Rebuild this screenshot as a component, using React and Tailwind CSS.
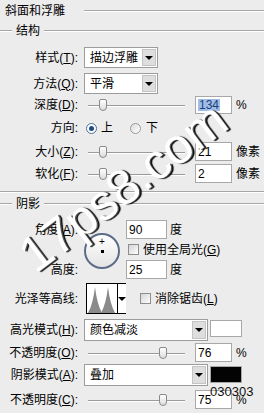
import React from 'react';

const Label = ({ name, k, w = 'w-[84px]' }) => (
    <span className={`${w} shrink-0 pr-[6px] text-right whitespace-nowrap`}>
        {name}
        {k && (<>(<u>{k}</u>)</>)}:
    </span>
);

const Arrow = () => (
    <span className="block w-0 h-0 border-l-[4px] border-r-[4px] border-t-[4px] border-l-transparent border-r-transparent border-t-black"></span>
);

const Select = ({ text, w }) => (
    <div className={`${w} h-full flex items-stretch bg-white border border-[#9c9c9c]`}>
        <span className="flex-1 pl-[5px] flex items-center">{text}</span>
        <span className="w-[14px] m-[1px] flex items-center justify-center bg-[#dedede] border border-[#c4c4c4]">
            <Arrow />
        </span>
    </div>
);

const Input = ({ value, w = 'w-[37px]', hl }) => (
    <div className={`${w} h-full bg-white border border-[#a8a8a8] pl-[2px] flex items-center`}>
        {hl ? <span className="bg-[#9fbde6] text-[#1d3f7a] px-[1px]">{value}</span> : <span>{value}</span>}
    </div>
);

const Slider = ({ at }) => (
    <div className="w-[111px] h-full relative shrink-0">
        <div className="absolute left-[4px] w-[97px] top-1/2 h-[2px] border-t border-[#9a9a9a] border-b border-b-white"></div>
        <div
            className="absolute top-1/2 -translate-y-1/2 w-[8px] h-[12px] rounded-b-[4px] rounded-t-[2px] border border-[#8a8a8a] bg-gradient-to-b from-white to-[#dcdcdc]"
            style={{ left: at }}
        ></div>
    </div>
);

const Radio = ({ on }) => (
    <span className={`w-[11px] h-[11px] rounded-full border flex items-center justify-center ${on ? 'border-[#4d6f9c] bg-white' : 'border-[#9a9a9a] bg-gradient-to-br from-[#dcdcdc] to-white'}`}>
        {on && <span className="w-[5px] h-[5px] rounded-full bg-[#1f4a8a]"></span>}
    </span>
);

const Check = () => (
    <span className="block w-[11px] h-[11px] shrink-0 border border-[#8e8e8e] bg-gradient-to-br from-[#d4d4d4] to-white"></span>
);

const Group = ({ title }) => (
    <div className="flex items-center">
        <div className="w-[12px] border-t border-[#a6a6a6] border-b border-b-white"></div>
        <span className="px-[4px]">{title}</span>
        <div className="flex-1 border-t border-[#a6a6a6] border-b border-b-white"></div>
    </div>
);

export default function App() {
    return (
        <div className="w-[264px] h-[413px] relative overflow-hidden bg-[#ececec] text-black text-[12px] leading-none font-['Liberation_Sans','Noto_Sans_CJK_SC',sans-serif]">
            <div className="flex flex-col">
                {/* 结构 */}
                <div className="h-[22px] flex items-center">
                    <span className="w-[84px] pl-[5px]">斜面和浮雕</span>
                    <div className="flex-1 border-t border-[#a6a6a6] border-b border-b-white"></div>
                </div>
                <div className="h-[18px] flex items-center"><div className="flex-1"><Group title="结构" /></div></div>

                <div className="mt-[7px] h-[21px] flex items-center">
                    <Label name="样式" k="T" />
                    <Select text="描边浮雕" w="w-[74px]" />
                </div>
                <div className="mt-[5px] h-[21px] flex items-center">
                    <Label name="方法" k="Q" />
                    <Select text="平滑" w="w-[74px]" />
                </div>
                <div className="mt-[2px] h-[18px] flex items-center">
                    <Label name="深度" k="D" />
                    <Slider at={15} />
                    <Input value="134" hl />
                    <span className="ml-[4px]">%</span>
                </div>
                <div className="mt-[4px] h-[20px] flex items-center">
                    <Label name="方向" />
                    <span className="ml-[2px]"><Radio on /></span>
                    <span className="ml-[4px]">上</span>
                    <span className="ml-[17px]"><Radio /></span>
                    <span className="ml-[5px]">下</span>
                </div>
                <div className="mt-[4px] h-[19px] flex items-center">
                    <Label name="大小" k="Z" />
                    <Slider at={15} />
                    <Input value="21" />
                    <span className="ml-[4px]">像素</span>
                </div>
                <div className="mt-[3px] h-[19px] flex items-center">
                    <Label name="软化" k="F" />
                    <Slider at={15} />
                    <Input value="2" />
                    <span className="ml-[4px]">像素</span>
                </div>

                <div className="mt-[8px] border-t border-[#a6a6a6] border-b border-b-white"></div>

                {/* 阴影 */}
                <div className="h-[22px] flex items-center"><div className="flex-1"><Group title="阴影" /></div></div>

                <div className="mt-[5px] h-[60px] flex">
                    <div className="w-[84px] flex flex-col">
                        <div className="h-[19px] flex items-center"><Label name="角度" k="A" /></div>
                        <div className="h-[21px]"></div>
                        <div className="h-[19px] flex items-center"><Label name="高度" /></div>
                    </div>
                    <div className="w-[42px]">
                        <div className="mt-[13px] w-[36px] h-[36px] rounded-full border-2 border-[#5c6c88] bg-gradient-to-b from-white to-[#e4e4e4] relative flex items-center justify-center">
                            <span className="w-[3px] h-[3px] bg-black"></span>
                            <span className="absolute top-[2px] left-1/2 -translate-x-1/2 text-[10px] leading-none">+</span>
                        </div>
                    </div>
                    <div className="flex flex-col">
                        <div className="h-[19px] flex items-center">
                            <Input value="90" w="w-[41px]" />
                            <span className="ml-[3px]">度</span>
                        </div>
                        <div className="h-[21px] flex items-center">
                            <span className="ml-[2px]"><Check /></span>
                            <span className="ml-[4px]">使用全局光(<u>G</u>)</span>
                        </div>
                        <div className="h-[19px] flex items-center">
                            <Input value="25" w="w-[41px]" />
                            <span className="ml-[3px]">度</span>
                        </div>
                    </div>
                </div>

                <div className="mt-[3px] h-[31px] flex items-center">
                    <Label name="光泽等高线" w="w-[86px] pr-[8px]" />
                    <div className="w-[40px] h-full flex border border-black bg-white">
                        <svg width="30" height="29" viewBox="0 0 30 29" className="shrink-0">
                            <path d="M1 29 Q6 20 8 3 Q10 20 15 29 Z" fill="#8a8a8a" />
                            <path d="M14 29 Q19 20 21 3 Q23 20 28 29 Z" fill="#8a8a8a" />
                        </svg>
                        <div className="flex-1 border-l border-black flex items-center justify-center bg-white"><Arrow /></div>
                    </div>
                    <span className="ml-[14px]"><Check /></span>
                    <span className="ml-[4px]">消除锯齿(<u>L</u>)</span>
                </div>

                <div className="mt-[5px] h-[22px] flex items-center">
                    <Label name="高光模式" k="H" />
                    <Select text="颜色减淡" w="w-[124px]" />
                    <div className="ml-[2px] self-start mt-[1px] w-[32px] h-[17px] bg-white border border-[#a8a8a8]"></div>
                </div>
                <div className="mt-[2px] h-[19px] flex items-center">
                    <Label name="不透明度" k="O" />
                    <Slider at={75} />
                    <Input value="76" />
                    <span className="ml-[4px]">%</span>
                </div>
                <div className="mt-[2px] h-[22px] flex items-center">
                    <Label name="阴影模式" k="A" />
                    <Select text="叠加" w="w-[124px]" />
                    <div className="ml-[2px] self-start mt-[2px] w-[32px] h-[17px] bg-[#030303] border border-[#a8a8a8]"></div>
                </div>
                <div className="mt-[4px] h-[19px] flex items-center">
                    <Label name="不透明度" k="C" />
                    <Slider at={75} />
                    <Input value="75" />
                    <span className="ml-[4px]">%</span>
                </div>
            </div>

            {/* color label overlay */}
            <span className="absolute left-[210px] top-[384px] text-[13px] leading-[15px] text-[#111] font-['Liberation_Sans',sans-serif]">030303</span>

            {/* watermark */}
            <span className="absolute left-[-2px] top-[162px] w-[250px] text-center text-[50px] leading-[50px] text-white font-['Liberation_Sans',sans-serif] -rotate-[37deg] [text-shadow:1px_1px_0_#555,2px_2px_1px_#000]">
                17ps8.com
            </span>
        </div>
    );
}
